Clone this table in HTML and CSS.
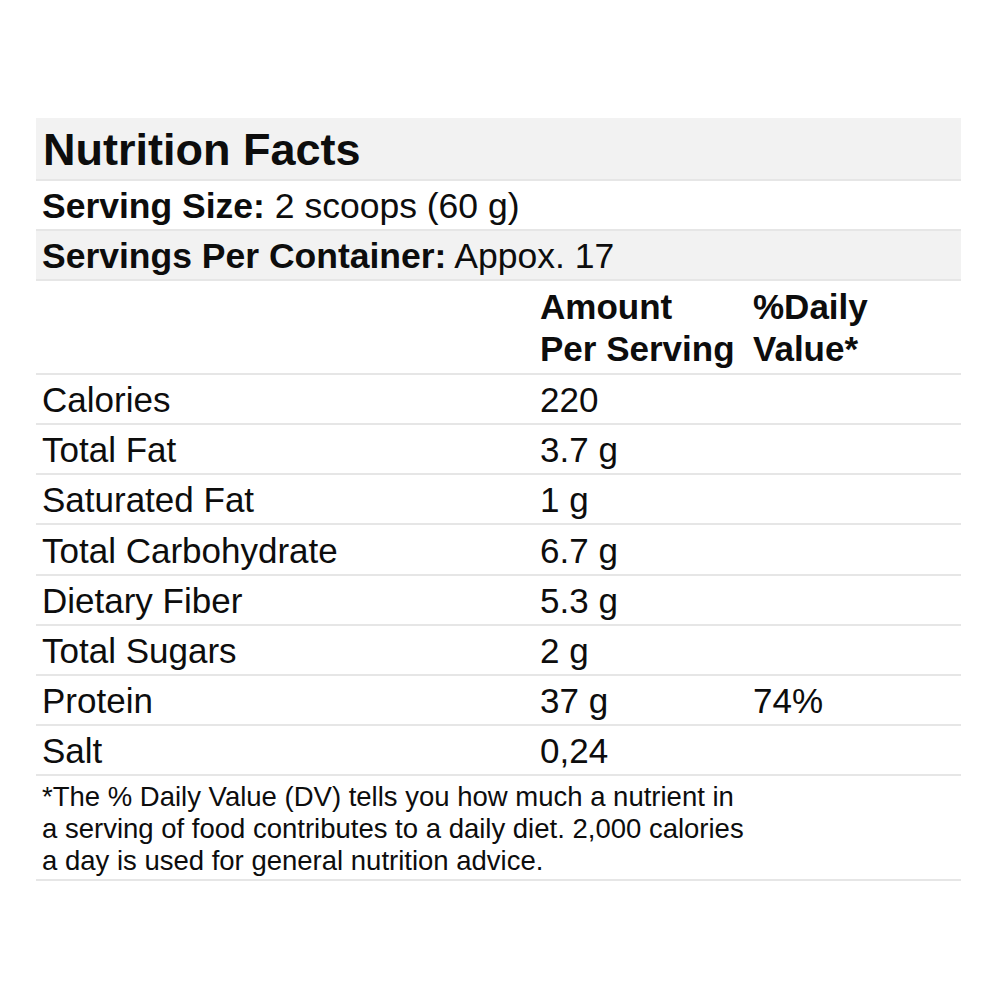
FILE: index.html
```html
<!DOCTYPE html>
<html>
<head>
<meta charset="utf-8">
<link rel="stylesheet" href="styles.css">
</head>
<body>
<div class="page">
<table class="facts">
  <colgroup>
    <col class="c1"><col class="c2"><col class="c3">
  </colgroup>
  <tr class="title-row"><td colspan="3" class="title">Nutrition Facts</td></tr>
  <tr class="info-row"><td colspan="3"><b>Serving Size:</b> 2 scoops (60 g)</td></tr>
  <tr class="info-row shade"><td colspan="3"><b>Servings Per Container:</b> Appox. 17</td></tr>
  <tr class="head-row"><td></td><td><b>Amount<br>Per Serving</b></td><td><b>%Daily<br>Value*</b></td></tr>
  <tr class="row"><td>Calories</td><td>220</td><td></td></tr>
  <tr class="row"><td>Total Fat</td><td>3.7 g</td><td></td></tr>
  <tr class="row"><td>Saturated Fat</td><td>1 g</td><td></td></tr>
  <tr class="row tall"><td>Total Carbohydrate</td><td>6.7 g</td><td></td></tr>
  <tr class="row"><td>Dietary Fiber</td><td>5.3 g</td><td></td></tr>
  <tr class="row"><td>Total Sugars</td><td>2 g</td><td></td></tr>
  <tr class="row"><td>Protein</td><td>37 g</td><td>74%</td></tr>
  <tr class="row"><td>Salt</td><td>0,24</td><td></td></tr>
  <tr class="note-row"><td colspan="3">*The % Daily Value (DV) tells you how much a nutrient in<br>a serving of food contributes to a daily diet. 2,000 calories<br>a day is used for general nutrition advice.</td></tr>
</table>
</div>
</body>
</html>
```
FILE: styles.css
```css
html, body {
  margin: 0;
  padding: 0;
  background: #ffffff;
}
.page {
  padding: 118px 0 0 36px;
  font-family: "Liberation Sans", Arial, sans-serif;
  color: #0d0d0d;
}
.facts {
  width: 925px;
  border-collapse: collapse;
  table-layout: fixed;
}
.c1 { width: 498px; }
.c2 { width: 213px; }
.c3 { width: 214px; }
.facts td {
  padding: 2px 0 0 6px;
  border-bottom: 2px solid #e6e6e6;
  vertical-align: middle;
  white-space: nowrap;
}
.title-row td {
  background: #f2f2f2;
  height: 58px;
  padding-top: 3px;
  font-size: 45px;
  font-weight: bold;
  padding-left: 7px;
}
.info-row td {
  height: 46px;
  font-size: 35.5px;
}
.info-row.shade td {
  background: #f2f2f2;
}
.head-row td {
  height: 90px;
  font-size: 35px;
  line-height: 42px;
}
.row td {
  height: 46px;
  font-size: 35px;
}
.row.tall td {
  height: 47px;
}
.note-row td {
  height: 101px;
  font-size: 27.5px;
  line-height: 32px;
}
```
